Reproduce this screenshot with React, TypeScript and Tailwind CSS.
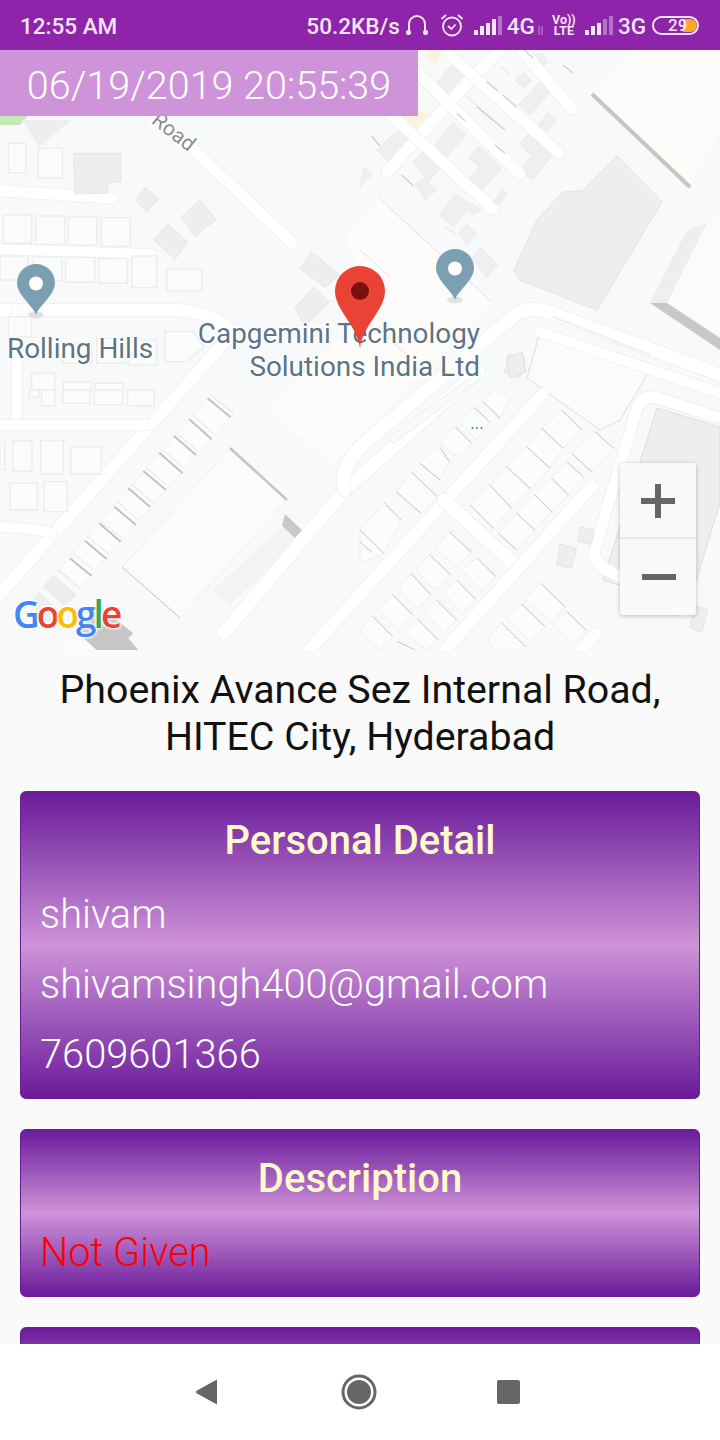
import React from "react";

type P = [number, number, number, number];

const shadows3: P[] = [
  [350, 170, 435, 240], [380, 95, 412, 122], [428, 135, 470, 172], [290, 190, 315, 212], [405, 285, 435, 310],
  [125, 375, 160, 408], [35, 258, 60, 288], [608, 45, 640, 70], [488, -5, 520, 25],
];
const thin3: P[] = [
  [58, 445, 395, 755], [0, 600, 90, 680], [255, 530, 290, 555], [320, 140, 400, 210], [420, 50, 450, 75], [0, 740, 130, 880], [70, 850, 220, 990],
];
const gray3 = [
  "245,80 280,40 318,70 280,110 250,145 222,115",
  "50,300 115,240 148,270 85,335",
  "160,335 190,305 240,355 205,395",
  "165,405 195,385 230,420 195,450",
  "220,290 280,218 320,255 255,325",
  "325,325 357,290 425,355 360,425 320,390 360,350",
  "480,280 515,243 585,310 515,390 480,355 515,320",
  "475,165 538,97 570,125 510,195",
  "465,90 490,68 515,92 490,115",
  "535,225 565,188 590,210 560,245",
  "400,455 425,415 443,433 415,465",
  "238,495 285,433 365,480 340,495 320,480 280,530",
  "295,550 320,522 350,548 322,585",
  "335,625 360,590 415,645 380,683",
  "432,970 445,910 495,925 480,985",
  "0,410 10,350 38,375",
  "520,15 545,10 565,35 540,55",
];
const lots5 = [
  "330,345 390,285 455,355 400,415", "390,285 440,230 510,295 455,355", "440,230 500,170 570,235 510,295",
  "500,170 545,115 610,175 570,235", "545,115 605,60 665,120 610,175", "635,190 705,125 760,175 695,245",
  "415,430 470,370 525,420 470,480", "470,370 525,315 575,365 525,420", "525,315 575,265 625,315 575,365",
  "575,265 620,215 670,260 625,315", "225,475 268,425 335,487 285,530", "170,540 208,493 272,555 225,600",
  "115,598 152,550 213,615 170,655", "55,660 97,613 158,675 115,718", "0,720 37,677 98,740 60,780",
  "305,540 350,503 408,560 365,605", "250,605 290,570 347,628 305,670", "192,665 230,630 290,690 250,730",
  "135,730 173,688 235,750 200,780", "495,625 542,580 617,652 570,695", "440,685 485,642 555,710 510,755",
  "385,745 425,698 497,770 480,780 400,780", "580,700 620,665 680,722 640,760", "108,305 155,247 232,320 183,370",
  "180,220 225,172 268,215 240,270", "240,160 285,110 335,160 298,205", "300,95 342,52 388,95 350,150",
  "365,35 400,0 450,25 420,85", "0,420 72,338 123,390 72,490 0,520",
];
const lines5: P[] = [
  [545, 115, 610, 175], [500, 170, 570, 235], [440, 230, 510, 295], [390, 285, 455, 355], [330, 345, 400, 415],
  [605, 60, 665, 120], [705, 125, 760, 175], [635, 190, 695, 245], [620, 215, 670, 260], [575, 265, 625, 315],
  [525, 315, 575, 365], [470, 370, 525, 420], [415, 430, 470, 480], [268, 425, 335, 487], [208, 493, 272, 555],
  [152, 550, 213, 615], [97, 613, 158, 675], [37, 677, 98, 740], [350, 503, 408, 560], [290, 570, 347, 628],
  [230, 630, 290, 690], [173, 688, 235, 750], [113, 755, 165, 780], [542, 580, 617, 652], [485, 642, 555, 710],
  [425, 698, 497, 770], [620, 665, 680, 722], [155, 247, 232, 320], [108, 305, 183, 370], [180, 220, 240, 270],
  [240, 172, 268, 215], [285, 110, 335, 160], [342, 52, 388, 95], [0, 455, 35, 487], [72, 338, 123, 390],
  [0, 420, 72, 490], [370, 35, 420, 85],
];
const rowLines4: P[] = [
  [210, 505, 275, 558], [255, 452, 320, 507], [298, 400, 362, 455], [343, 350, 408, 405], [385, 295, 450, 350],
  [430, 243, 498, 300], [478, 188, 548, 250], [522, 138, 588, 195], [568, 88, 635, 148], [623, 25, 692, 82],
];
const rowThin4: P[] = [
  [175, 540, 238, 592], [220, 490, 280, 540], [263, 440, 325, 490], [305, 395, 365, 445], [352, 335, 412, 388],
  [395, 283, 458, 338], [438, 232, 500, 285], [488, 178, 548, 232], [530, 130, 595, 185], [578, 75, 640, 130], [632, 15, 700, 70],
];
const houses2: [number, number, number, number][] = [
  [25, 70, 52, 88], [115, 85, 72, 90], [10, 285, 85, 85], [107, 288, 88, 85], [205, 290, 85, 85], [303, 293, 88, 85],
  [0, 408, 85, 72], [100, 410, 85, 72], [197, 412, 88, 75], [297, 415, 85, 75], [395, 408, 75, 95], [500, 448, 105, 65],
  [25, 590, 70, 60], [190, 670, 85, 60], [290, 655, 85, 75], [385, 660, 85, 75], [95, 760, 70, 50], [190, 785, 85, 25], [285, 790, 85, 20],
];
const houses4: [number, number, number, number][] = [
  [0, 155, 14, 85], [38, 153, 58, 90], [122, 152, 68, 100], [212, 170, 92, 82], [30, 280, 82, 80], [132, 275, 70, 90], [125, 0, 40, 48],
  [188, 0, 82, 40], [283, 0, 85, 44], [383, 0, 80, 48], [88, 0, 30, 22],
];

function Road({ d, w = 12 }: { d: string; w?: number }) {
  return (
    <>
      <path d={d} fill="none" stroke="#eeeff0" strokeWidth={w + 1.5} strokeLinecap="round" strokeLinejoin="round" />
      <path d={d} fill="none" stroke="#ffffff" strokeWidth={w} strokeLinecap="round" strokeLinejoin="round" />
    </>
  );
}

function Pin({ x, tip }: { x: number; tip: number }) {
  const c = tip - 32;
  return (
    <g>
      <ellipse cx={x} cy={tip} rx={8} ry={3.5} fill="#dfe1e2" />
      <path
        d={`M${x} ${tip}C${x - 2} ${tip - 8} ${x - 19} ${c + 12} ${x - 19} ${c}A19 19 0 0 1 ${x + 19} ${c}C${x + 19} ${c + 12} ${x + 2} ${tip - 8} ${x} ${tip}Z`}
        fill="#7ba0b3"
      />
      <circle cx={x} cy={c + 0.5} r={7} fill="#ffffff" />
    </g>
  );
}

function MapDrawing() {
  return (
    <svg viewBox="0 50 720 600" className="block h-[600px] w-[720px] font-['Roboto',sans-serif]">
      <rect x="0" y="50" width="720" height="600" fill="#f8f9fa" />
      <path d="M0 116H28L20 125H0Z" fill="#c5e8b7" />

      {/* large buildings */}
      <polygon points="635,50 720,50 720,130 690,187 592,93" fill="#fdfcfa" />
      <path d="M592 94L690 187" stroke="#c9c6c0" strokeWidth="4" />
      <polygon points="380,198 492,302 332,464 270,410 372,305 345,235" fill="#fdfcfa" />
      <polygon points="617,156 662,202 597,310 520,280 514,270 537,220 563,192 582,191" fill="#eeeeee" stroke="#e2e2e2" />
      <polygon points="230,448 287,500 180,618 122,567" fill="#fafbfb" stroke="#eeeeee" />
      <path d="M230 448L287 500" stroke="#c4c4c4" strokeWidth="2.5" />
      <path d="M122 567L180 618" stroke="#c8c8c8" />
      <polygon points="707,223 720,215 720,335 667,303" fill="#fafbfb" />
      <polygon points="707,223 687,230 650,303 667,303" fill="#eeeeee" />
      <polygon points="650,303 667,303 720,338 720,350" fill="#c8c8c8" />
      <polygon points="657,408 720,427 720,503 688,607 603,580" fill="#eeeeee" stroke="#dddddd" />
      <polygon points="527,378 540,332 650,370 620,420 600,430" fill="#fafbfb" stroke="#dddddd" />
      <polygon points="282,526 285,514 302,530 298,541" fill="#c8c8c8" />
      <polygon points="212,590 283,527 297,541 230,605" fill="#f2f3f3" />

      {/* top right cluster */}
      <g transform="translate(360 50) scale(0.3333)">
        {gray3.map((p) => (
          <polygon key={p} points={p} fill="#efefef" stroke="#e2e2e2" strokeWidth="1.5" />
        ))}
        {thin3.map(([a, b, c, d]) => (
          <line key={`${a}${b}`} x1={a} y1={b} x2={c} y2={d} stroke="#d4d4d4" strokeWidth="2" />
        ))}
        <polygon points="125,200 165,238 205,195 160,170" fill="#fdf1e0" />
        <polygon points="195,20 225,42 245,0 210,0" fill="#fdf1e0" />
      </g>

      {/* roads */}
      <Road d="M150 108L292 243" w={11} />
      <Road d="M-10 190L112 198" w={11} />
      <Road d="M-10 249L150 254" w={10} />
      <Road d="M-10 310H180Q212 314 226 326Q232 334 222 345L-10 605" w={12} />
      <Road d="M17 310V425" w={10} />
      <Road d="M-10 425H150" w={10} />
      <Road d="M-10 527Q20 526 52 533" w={10} />
      <Road d="M224 633L345 490L478 372" w={13} />
      <Road d="M345 490Q338 472 360 447L515 315Q532 303 560 316L740 382" w={13} />
      <Road d="M540 332L740 400" w={10} />
      <path d="M553 317L650 355" stroke="#f0f1f2" strokeWidth="2.5" />
      <polygon points="393,444 388,438 478,372 483,377" fill="#f8f9fa" stroke="#eeeff0" />
      <Road d="M543 394L300 660" w={12} />
      <Road d="M444 500L518 568" w={13} />
      <Road d="M592 486L436 660" w={12} />
      <Road d="M597 633L570 660" w={11} />
      <Road d="M387 172L473 77L510 40" w={11} />
      <Road d="M370 95L493 209" w={11} />
      <Road d="M410 65L520 174" w={11} />
      <Road d="M450 55L559 153" w={11} />
      <Road d="M515 42L572 109" w={11} />
      <path d="M654 397Q640 396 636 412L596 545Q590 562 607 570L684 612M654 397L720 418" fill="none" stroke="#eeeff0" strokeWidth="13" strokeLinecap="round" />
      <path d="M654 397Q640 396 636 412L596 545Q590 562 607 570L684 612M654 397L720 418" fill="none" stroke="#ffffff" strokeWidth="11" strokeLinecap="round" />

      {/* shadows on the cluster, above its roads */}
      <g transform="translate(360 50) scale(0.3333)">
        {shadows3.map(([a, b, c, d]) => (
          <line key={`${a}${b}`} x1={a} y1={b} x2={c} y2={d} stroke="#cfcfcf" strokeWidth="4" />
        ))}
      </g>

      {/* strip of terrace houses */}
      <g transform="translate(0 390) scale(0.3333)">
        <polygon points="175,540 632,15 700,70 238,592" fill="#fbfcfc" stroke="#eeeff0" strokeWidth="2" />
        {rowThin4.map(([a, b, c, d]) => (
          <line key={`${a}${b}`} x1={a} y1={b} x2={c} y2={d} stroke="#d4d4d4" strokeWidth="2" />
        ))}
        {rowLines4.map(([a, b, c, d]) => (
          <line key={`${a}${b}`} x1={a} y1={b} x2={c} y2={d} stroke="#c2c2c2" strokeWidth="6" />
        ))}
        {houses4.map(([x, y, w, h]) => (
          <rect key={`${x}${y}`} x={x} y={y} width={w} height={h} fill="#fafbfb" stroke="#ececec" strokeWidth="4" />
        ))}
        <polygon points="130,590 162,557 228,615 193,645" fill="#eeeeee" stroke="#e0e0e0" strokeWidth="2" />
        <polygon points="95,630 118,605 175,660 140,720" fill="#eeeeee" />
        <polygon points="300,650 400,730 385,745 415,780 290,780 230,725" fill="#c6c6c6" />
        <polygon points="225,725 175,780 285,780" fill="#fafbfb" />
      </g>

      {/* houses top left */}
      <g transform="translate(0 120) scale(0.3333)">
        {houses2.map(([x, y, w, h]) => (
          <rect key={`${x}${y}`} x={x} y={y} width={w} height={h} fill="#fafbfb" stroke="#ececec" strokeWidth="4" />
        ))}
        <polygon points="220,100 362,100 362,185 322,190 322,220 225,222" fill="#eeeeee" stroke="#e0e0e0" strokeWidth="2" />
        <polygon points="65,0 215,0 118,80" fill="#eeeeee" />
        <polygon points="405,240 437,203 476,237 440,276" fill="#eeeeee" stroke="#e0e0e0" strokeWidth="2" />
        <polygon points="545,290 600,240 650,300 620,320 585,350" fill="#eeeeee" stroke="#e0e0e0" strokeWidth="2" />
        <polygon points="462,360 503,313 563,365 525,418" fill="#eeeeee" stroke="#e0e0e0" strokeWidth="2" />
        <polygon points="900,445 935,397 1020,465 975,502" fill="#eeeeee" stroke="#e0e0e0" strokeWidth="2" />
        <polygon points="885,565 940,502 988,545 915,620" fill="#eeeeee" stroke="#e0e0e0" strokeWidth="2" />
        <polygon points="495,635 580,635 612,680 560,725 495,725" fill="#fafbfb" stroke="#ececec" strokeWidth="4" />
      </g>

      {/* lots bottom right */}
      <g transform="translate(360 390) scale(0.3333)">
        {lots5.map((p) => (
          <polygon key={p} points={p} fill="#fbfcfc" stroke="#eeeff0" strokeWidth="3" />
        ))}
        {lines5.map(([a, b, c, d]) => (
          <line key={`${a}${b}`} x1={a} y1={b} x2={c} y2={d} stroke="#c6c6c6" strokeWidth="3" />
        ))}
        <polygon points="600,462 650,475 635,535 590,525" fill="#eeeeee" stroke="#e0e0e0" strokeWidth="2" />
        <polygon points="660,410 703,420 695,463 653,455" fill="#eeeeee" stroke="#e0e0e0" strokeWidth="2" />
        <polygon points="1010,648 1044,660 1025,728 988,712" fill="#eeeeee" stroke="#e0e0e0" strokeWidth="2" />
      </g>
      <polygon points="507,358 522,352 526,372 510,378" fill="#eeeeee" stroke="#dfdfdf" />

      {/* labels */}
      <text x="173" y="133" transform="rotate(38 173 133)" textAnchor="middle" dominantBaseline="middle" fontSize="21" fill="#8c8c8c" stroke="#ffffff" strokeWidth="3" className="[paint-order:stroke]">
        Road
      </text>
      <text x="7" y="358" fontSize="27.900" fill="#5b7486" stroke="#ffffff" strokeWidth="3" className="[paint-order:stroke]">
        Rolling Hills
      </text>
      <text x="480" y="343" textAnchor="end" fontSize="27.900" fill="#5b7486" stroke="#ffffff" strokeWidth="3" className="[paint-order:stroke]">
        Capgemini Technology
      </text>
      <text x="480" y="376" textAnchor="end" fontSize="27.900" fill="#5b7486" stroke="#ffffff" strokeWidth="3" className="[paint-order:stroke]">
        Solutions India Ltd
      </text>
      <circle cx="472.500" cy="428" r="1" fill="#5b7486" />
      <circle cx="477" cy="428" r="1" fill="#5b7486" />
      <circle cx="481.500" cy="428" r="1" fill="#5b7486" />

      <Pin x={36} tip={315} />
      <Pin x={455} tip={300} />
      <path d="M360 348C357 325 335 310 335 291A25 25 0 0 1 385 291C385 310 363 325 360 348Z" fill="#ea4335" />
      <circle cx="360" cy="291" r="9" fill="#7b1010" />
    </svg>
  );
}

function Signal({ dim }: { dim: number }) {
  const hs = [5, 9, 12, 16, 19];
  return (
    <svg width="28" height="20" viewBox="0 0 28 20">
      {hs.map((h, i) => (
        <rect key={h} x={i * 6} y={20 - h} width="4" height={h} fill="#f3e5f5" opacity={i >= dim ? 0.4 : 1} />
      ))}
    </svg>
  );
}

function StatusBar() {
  return (
    <div className="flex h-[50px] shrink-0 items-center bg-[#8e24aa] pr-[21px] pl-[20px] text-[22.500px] leading-none font-medium text-[#f3e5f5]">
      <span className="mt-[3px]">12:55 AM</span>
      <div className="ml-auto flex items-center">
        <span className="mt-[3px]">50.2KB/s</span>
        <svg width="24" height="22" viewBox="0 0 24 22" fill="none" className="ml-[5px]">
          <path d="M4 19V10a8 8 0 0 1 16 0v9" stroke="#f3e5f5" strokeWidth="2" />
          <rect x="1" y="16" width="5" height="5" rx="2" fill="#f3e5f5" />
          <rect x="18" y="16" width="5" height="5" rx="2" fill="#f3e5f5" />
        </svg>
        <svg width="24" height="24" viewBox="0 0 24 24" fill="none" className="ml-[11px]">
          <circle cx="12" cy="13.500" r="9" stroke="#f3e5f5" strokeWidth="1.800" />
          <path d="M8 13l3.500 3 4-4.500M1.500 6L6 2M22.500 6L18 2" stroke="#f3e5f5" strokeWidth="1.800" />
        </svg>
        <div className="ml-[10px]">
          <Signal dim={4} />
        </div>
        <span className="mt-[3px] ml-[5px]">4G</span>
        <svg width="7" height="9" viewBox="0 0 7 9" className="mt-[10px] ml-[2px]">
          <path d="M2 0V9M5 0V9" stroke="#f3e5f5" strokeWidth="1" opacity="0.6" />
        </svg>
        <div className="ml-[9px] flex w-[22px] flex-col items-center text-[12.500px] leading-[11px] font-bold">
          <span>Vo))</span>
          <span>LTE</span>
        </div>
        <div className="ml-[10px]">
          <Signal dim={3} />
        </div>
        <span className="mt-[3px] ml-[5px]">3G</span>
        <div className="relative ml-[6px] flex h-[19px] w-[47px] items-center overflow-hidden rounded-full border-2 border-[#f3e5f5]">
          <span className="absolute top-[1px] right-0 h-[13px] w-[14px] rounded-r-full bg-[#f9a825]" />
          <span className="relative ml-[14px] text-[17px] leading-none">29</span>
        </div>
      </div>
    </div>
  );
}

function MapPanel() {
  return (
    <div className="relative h-[600px] shrink-0 overflow-hidden">
      <MapDrawing />
      <div className="absolute top-0 left-0 flex h-[66px] w-[418px] items-center justify-center bg-[#ce93d8] pt-[5px] text-[39.500px] leading-none font-light text-white">
        06/19/2019 20:55:39
      </div>
      <div className="absolute top-[413px] left-[620px] flex h-[152px] w-[76px] flex-col rounded-[3px] bg-[#fafafa]/90 shadow-[0_1px_4px_rgba(0,0,0,0.25)]">
        <div className="flex h-[76px] items-center justify-center border-b-2 border-[#e8e8e8] pt-[2px]">
          <svg width="34" height="34" viewBox="0 0 34 34">
            <path d="M14 0h6v14h14v6H20v14h-6V20H0v-6h14z" fill="#666666" />
          </svg>
        </div>
        <div className="flex flex-1 items-center justify-center pl-[1px]">
          <div className="h-[6px] w-[34px] bg-[#666666]" />
        </div>
      </div>
      <div className="absolute top-[545px] left-[13px] flex font-['Open_Sans',sans-serif] text-[37px] leading-none font-semibold tracking-[-3px] [text-shadow:0_0_3px_#fff,0_0_3px_#fff,0_0_3px_#fff,0_0_3px_#fff]">
        <span className="text-[#4285f4]">G</span>
        <span className="text-[#ea4335]">o</span>
        <span className="text-[#fbbc05]">o</span>
        <span className="text-[#4285f4]">g</span>
        <span className="text-[#34a853]">l</span>
        <span className="text-[#ea4335]">e</span>
      </div>
    </div>
  );
}

function Card({ title, className, children }: { title: string; className: string; children?: React.ReactNode }) {
  return (
    <div className={`mx-[20px] shrink-0 rounded-[6px] border border-[#6a1b9a] bg-[linear-gradient(180deg,#6a1b9a_0%,#ce93d8_50%,#6a1b9a_100%)] px-[19px] ${className}`}>
      <div className="text-center text-[40px] leading-[46px] font-medium text-[#fffacd]">{title}</div>
      {children}
    </div>
  );
}

export default function App() {
  return (
    <div className="flex h-[1440px] w-[720px] flex-col overflow-hidden bg-[#fafafa] font-['Roboto',sans-serif]">
      <StatusBar />
      <MapPanel />
      <div className="flex min-h-0 flex-1 flex-col overflow-hidden">
        <div className="h-[141px] shrink-0 px-[20px] pt-[17px] text-center text-[39.300px] leading-[47px] text-[#111111]">
          Phoenix Avance Sez Internal Road,
          <br />
          HITEC City, Hyderabad
        </div>
        <Card title="Personal Detail" className="h-[308px] pt-[26px]">
          <div className="mt-[16px] text-[39.800px] leading-[70px] font-light text-white">
            <div>shivam</div>
            <div>shivamsingh400@gmail.com</div>
            <div>7609601366</div>
          </div>
        </Card>
        <Card title="Description" className="mt-[30px] h-[168px] pt-[26px]">
          <div className="mt-[16px] text-[39.800px] leading-[70px] font-light text-[#ff0000]">Not Given</div>
        </Card>
        <Card title="" className="mt-[30px] h-[168px]" />
      </div>
      <div className="flex h-[96px] shrink-0 items-center justify-center bg-white pr-[5px]">
        <svg width="24" height="28" viewBox="0 0 24 28" className="mr-[122px]">
          <path d="M22 1.500V26.500L2 15.500Q0 14 2 12.500Z" fill="#666666" />
        </svg>
        <svg width="36" height="36" viewBox="0 0 36 36" className="mr-[120px]">
          <circle cx="18" cy="18" r="16" fill="none" stroke="#666666" strokeWidth="3" />
          <circle cx="18" cy="18" r="12" fill="#666666" />
        </svg>
        <div className="h-[24px] w-[23px] rounded-[2px] bg-[#666666]" />
      </div>
    </div>
  );
}
